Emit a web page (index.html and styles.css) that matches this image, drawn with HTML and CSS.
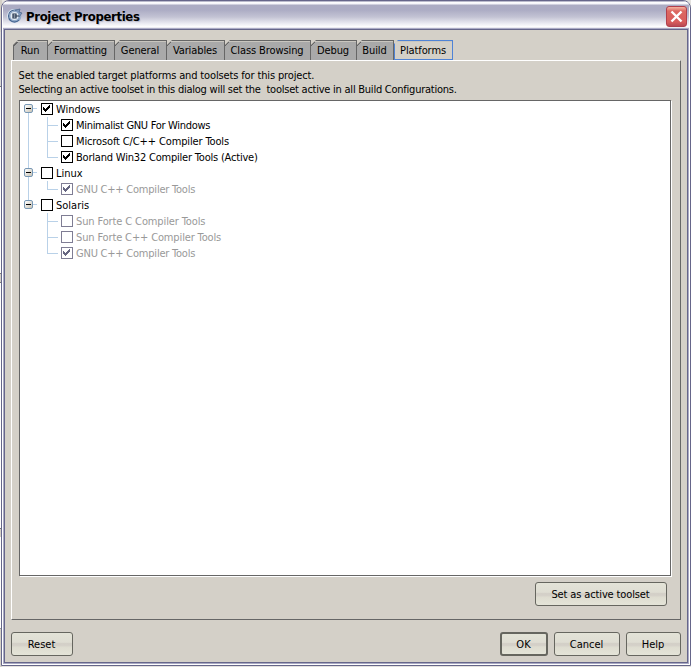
FILE: index.html
```html
<!DOCTYPE html>
<html lang="en">
<head>
<meta charset="utf-8">
<title>Project Properties</title>
<link rel="stylesheet" href="styles.css">
</head>
<body>
<svg width="0" height="0" class="defs"><defs>
<symbol id="tick" viewBox="0 0 8 8"><path d="M0 2h1v1h1v1h1v-1h1v-1h1v-1h1v-1h1v3h-1v1h-1v1h-1v1h-1v1h-1v-1h-1v-1h-1z"/></symbol>
</defs></svg>
<div class="window">
<header class="titlebar">
<svg class="logo" width="16" height="16" viewBox="0 0 16 16"><circle cx="7.5" cy="8" r="6.8" fill="#8fa8c8"/><path d="M2 11A6 6 0 0 1 8 2" fill="none" stroke="#dce8f4" stroke-width="2"/><path d="M12 4A6 6 0 1 0 12 12" fill="none" stroke="#405f8b" stroke-width="1.1"/><path d="M9 2l4-1-1 3 3 1-3 4" fill="#7e98bd" stroke="#466087" stroke-width=".7"/><circle cx="7.5" cy="8" r="4" fill="#e5edf5"/><path d="M6 5.5v5M6 6h3v2H6M6 10h3V8h3" fill="none" stroke="#23334d" stroke-width="1.2"/></svg>
<h1><span>Project Properties</span></h1>
<button class="close" aria-label="Close"><svg width="13" height="13" viewBox="0 0 13 13"><path d="M1.5 1.5l10 10M11.5 1.5l-10 10" stroke="#fff" stroke-width="2.4"/></svg></button>
</header>
<main class="client">
<nav class="tabs">
<div class="tab run">Run</div><div class="tab formatting">Formatting</div><div class="tab general">General</div><div class="tab variables">Variables</div><div class="tab browsing">Class Browsing</div><div class="tab debug">Debug</div><div class="tab build">Build</div><div class="tab active">Platforms</div>
</nav>
<section class="panel">
<p class="first">Set the enabled target platforms and toolsets for this project.</p>
<p class="second">Selecting an active toolset in this dialog will set the&nbsp; toolset active in all Build Configurations.</p>
<div class="tree">
<div class="group"><div class="row root"><i class="toggle"></i><i class="box"><svg><use href="#tick"/></svg></i><span>Windows</span></div>
<div class="row child"><i class="box"><svg><use href="#tick"/></svg></i><span class="w1">Minimalist GNU For Windows</span></div>
<div class="row child"><i class="box"></i><span class="w2">Microsoft C/C++ Compiler Tools</span></div>
<div class="row child"><i class="box"><svg><use href="#tick"/></svg></i><span class="w3">Borland Win32 Compiler Tools (Active)</span></div></div>
<div class="group"><div class="row root"><i class="toggle"></i><i class="box"></i><span>Linux</span></div>
<div class="row child off"><i class="box"><svg><use href="#tick"/></svg></i><span class="w4">GNU C++ Compiler Tools</span></div></div>
<div class="group"><div class="row root"><i class="toggle"></i><i class="box"></i><span>Solaris</span></div>
<div class="row child off"><i class="box"></i><span class="w5">Sun Forte C Compiler Tools</span></div>
<div class="row child off"><i class="box"></i><span class="w6">Sun Forte C++ Compiler Tools</span></div>
<div class="row child off"><i class="box"><svg><use href="#tick"/></svg></i><span class="w4">GNU C++ Compiler Tools</span></div></div>
</div>
<button class="btn toolset">Set as active toolset</button>
</section>
<footer><button class="btn reset">Reset</button><button class="btn ok">OK</button><button class="btn cancel">Cancel</button><button class="btn help">Help</button></footer>
</main>
</div>
</body>
</html>
```
FILE: styles.css
```css
* { box-sizing: border-box; }
body { margin: 0; height: 667px; overflow: hidden; background: linear-gradient(#d4d0c8 0 32px, #d8d8d8 32px 86px, #777 86px 87px, #fff 87px 273px, #777 273px 274px, #d4d0c8 274px 282px, #777 282px 283px, #fff 283px 528px, #777 528px 529px, #d4d0c8 529px 537px, #fff 537px 628px, #999 628px 629px, #d4d0c8 629px) 0 0 / 2px 667px no-repeat, #e4e2df; font: 11px/14px "DejaVu Sans Condensed", sans-serif; color: #000; }
.defs { position: absolute; }
.window { margin-left: 1px; width: 690px; height: 666px; border: 1px solid #66668a; border-radius: 8px 8px 0 0; background: #fff; padding: 0 1px 1px; overflow: hidden; }
.titlebar { height: 28px; display: flex; align-items: center; padding: 1px 2px 0 4px; background: linear-gradient(#77779a 0, #fff 1px, #f3f3f8 3px, #acacc3 4px, #acacc4 9px, #c3c3d4 16px, #eeeef4 23px, #fff 26px, #b8b8cc 28px); }
h1 { margin: 2px 0 0 3px; font: bold 13px/18px "DejaVu Sans Condensed", sans-serif; flex: 1; text-shadow: 1px 1px 1px #b9bacb; white-space: nowrap; }
h1 span { letter-spacing: -.35px; }
.close { width: 21px; height: 21px; margin-top: 1px; padding: 0; display: grid; place-items: center; border: 1px solid #b23f4c; border-radius: 3px; background: linear-gradient(#f5b5a0, #dc6862 4px, #d85c5b 15px, #b84a54); }
.client { height: 634px; border: 1px solid #66668a; outline: 1px solid #aaaac5; margin: 0 1px; background: #d4d0c8; padding: 10px 6px 0; }
.tabs { display: flex; height: 20px; padding-left: 2px; }
.tab { height: 20px; flex: none; padding-right: 1px; text-align: center; line-height: 20px; letter-spacing: -.1px; background: linear-gradient(135deg, #666 4px, #a9a9a9 4px); border-top: 1px solid #666; border-right: 1px solid #666; box-shadow: inset 0 1px #c9c6bf; clip-path: polygon(5px 0, 100% 0, 100% 100%, 0 100%, 0 5px); white-space: nowrap; }
.run { width: 35px; border-left: 1px solid #666; } .formatting { width: 67px; } .general { width: 52px; } .variables { width: 58px; } .browsing { width: 86px; } .debug { width: 46px; } .build { width: 37px; }
.active { width: 59px; background: #d4d0c8; border: 1px solid #4f83d6; line-height: 19px; clip-path: polygon(4px 0, 100% 0, 100% 100%, 0 100%, 0 4px); }
.panel { height: 560px; border: 1px solid #666; border-top-color: #fff; border-left-color: #fff; padding: 8px 9px 0 7px; display: flex; flex-direction: column; }
p { margin: 0 0 0 -.5px; white-space: nowrap; }
.first { letter-spacing: -.14px; }
.second { letter-spacing: -.24px; }
.w1 { letter-spacing: -.3px; } .w2 { letter-spacing: -.13px; } .w3 { letter-spacing: -.2px; }
.w4 { letter-spacing: -.22px; } .w5 { letter-spacing: -.12px; } .w6 { letter-spacing: -.14px; }
.tree { margin-top: 3px; height: 476px; border: 1px solid #666; box-shadow: 1px 1px #fff; background: #fff; flex: none; }
.group { position: relative; }
.group:not(:last-child)::before { content: ""; position: absolute; left: 8px; top: 8px; bottom: -8px; width: 1px; background: #b9d1e8; }
.row { height: 16px; display: flex; align-items: center; position: relative; white-space: nowrap; }
.row span { padding-top: 1px; }
.root { padding-left: 4px; }
.toggle { width: 9px; height: 9px; border: 1px solid #7898b5; border-radius: 2px; background: linear-gradient(#000, #000) 1px 3px / 5px 1px no-repeat, linear-gradient(135deg, #fff, #c9c4b6); margin: 0 8px 1px 0; position: relative; }
.toggle::after { content: ""; position: absolute; left: 8px; top: 3px; width: 4px; height: 1px; background: #b9d1e8; }
.box { width: 12px; height: 12px; border: 1px solid #000; margin-right: 3px; display: block; padding: 1px; }
.box svg { display: block; width: 8px; height: 8px; shape-rendering: crispEdges; }
.child { padding-left: 41px; }
.child::before { content: ""; position: absolute; left: 27px; top: 0; width: 10px; height: 8px; border: solid #b9d1e8; border-width: 0 0 1px 1px; }
.child:not(:last-child)::after { content: ""; position: absolute; left: 27px; top: 8px; width: 1px; height: 8px; background: #b9d1e8; }
.off { color: #999; }
.off .box { border-color: #7f7d94; fill: #666681; }
.btn { height: 24px; padding: 1px 1px 0 0; font: inherit; color: #000; border: 1px solid #66665f; border-radius: 3px; background: linear-gradient(#e3e3d7, #dfddd3 42%, #d3cfc7 48%, #d5d1c9 58%, #dedcd0 64%, #e4e4d8); }
.toolset { width: 132px; align-self: flex-end; margin: 6px 4px 0 0; letter-spacing: -.13px; }
footer { display: flex; padding-top: 12px; gap: 6px; }
.reset { width: 62px; margin-right: auto; } .ok { width: 48px; border-width: 2px; } .cancel { width: 66px; } .help { width: 55px; }
```
